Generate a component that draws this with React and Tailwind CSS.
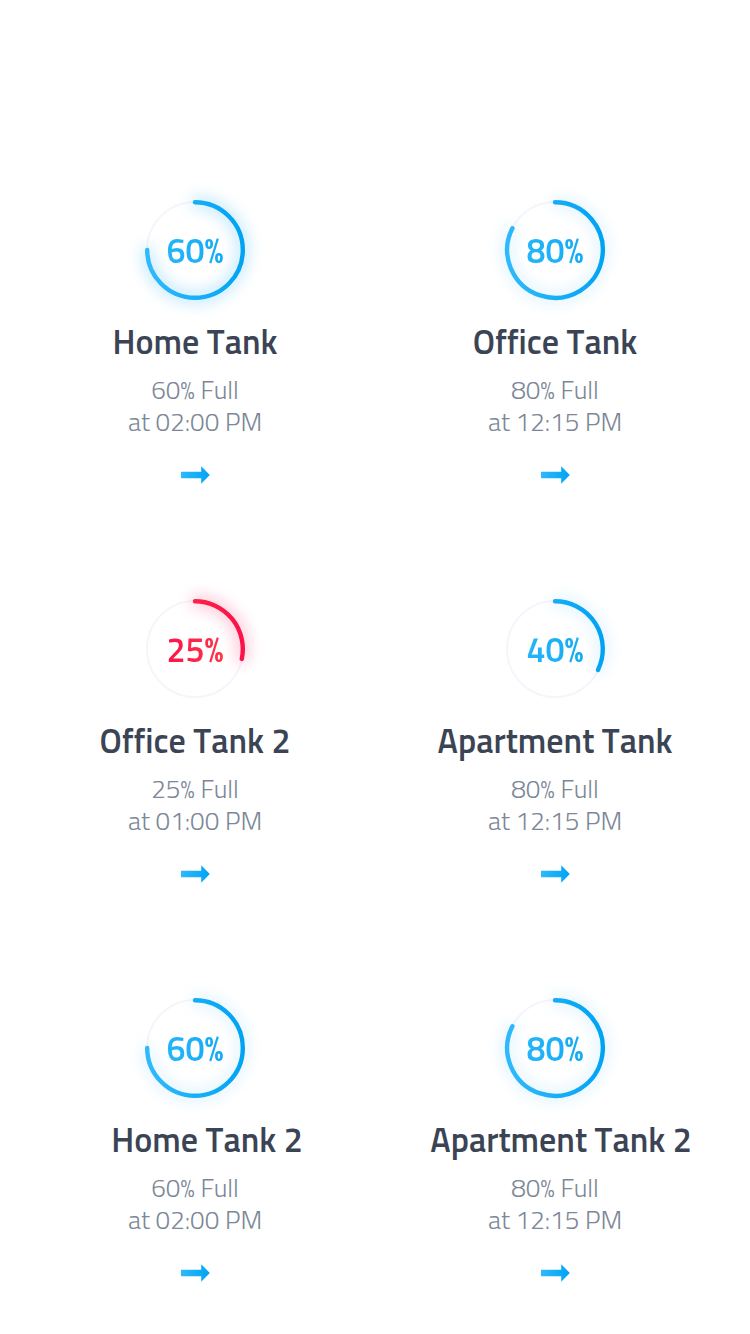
const tanks = [
  { id: "home", name: "Home Tank", level: "60%", status: "60% Full", time: "at 02:00 PM", sweep: 270, tone: "blue", glow: 0.4 },
  { id: "office", name: "Office Tank", level: "80%", status: "80% Full", time: "at 12:15 PM", sweep: 297, tone: "blue", glow: 0.2 },
  { id: "office-2", name: "Office Tank 2", level: "25%", status: "25% Full", time: "at 01:00 PM", sweep: 102, tone: "red", glow: 0.4 },
  { id: "apartment", name: "Apartment Tank", level: "40%", status: "80% Full", time: "at 12:15 PM", sweep: 116, tone: "blue", glow: 0.2 },
  { id: "home-2", name: "Home Tank 2", level: "60%", status: "60% Full", time: "at 02:00 PM", sweep: 270, tone: "blue", glow: 0.2, titleClass: "pl-6" },
  { id: "apartment-2", name: "Apartment Tank 2", level: "80%", status: "80% Full", time: "at 12:15 PM", sweep: 297, tone: "blue", glow: 0.2, titleClass: "pl-3" },
];

const tones = {
  blue: { from: "#2fb9fb", to: "#00a3f3", text: "from-[#25b5f8] to-[#10abf5]" },
  red: { from: "#ff3347", to: "#fc1148", text: "from-[#fc1148] to-[#ff3347]" },
};

function arcPath(sweep, r = 47.8) {
  const a = (sweep * Math.PI) / 180;
  const x = 80 + r * Math.sin(a);
  const y = 80 - r * Math.cos(a);
  return `M80 ${80 - r}A${r} ${r} 0 ${sweep > 180 ? 1 : 0} 1 ${x.toFixed(2)} ${y.toFixed(2)}`;
}

function Ring({ tank }) {
  const tone = tones[tank.tone];
  const d = arcPath(tank.sweep);
  return (
    <div className="relative grid size-[100px] place-items-center">
      <svg className="absolute -inset-[30px] size-[160px]" viewBox="0 0 160 160" fill="none" aria-hidden="true">
        <defs>
          <linearGradient id={`ring-${tank.id}`} gradientUnits="userSpaceOnUse" x1="32" y1="84" x2="128" y2="76">
            <stop stopColor={tone.from} />
            <stop offset="1" stopColor={tone.to} />
          </linearGradient>
          <filter id={`glow-${tank.id}`} filterUnits="userSpaceOnUse" x="0" y="0" width="160" height="160">
            <feGaussianBlur stdDeviation="8" />
          </filter>
        </defs>
        <circle cx="80" cy="80" r="48" stroke="#f5f5fc" strokeWidth="2" />
        <path d={d} stroke={tone.to} strokeWidth="7" strokeLinecap="round" opacity={tank.glow} filter={`url(#glow-${tank.id})`} />
        <path d={d} stroke={`url(#ring-${tank.id})`} strokeWidth="4.4" strokeLinecap="round" />
      </svg>
      <span className={`relative bg-linear-to-r bg-clip-text text-[34px] leading-10 font-semibold text-transparent ${tone.text}`}>
        {tank.level}
      </span>
    </div>
  );
}

function Arrow({ id }) {
  return (
    <svg className="h-[18px] w-[30px]" viewBox="0 0 30 18" aria-hidden="true">
      <defs>
        <linearGradient id={`arrow-${id}`} x1="0" y1="0.5" x2="1" y2="0.5">
          <stop stopColor="#2fb9fb" />
          <stop offset="1" stopColor="#00a3f3" />
        </linearGradient>
      </defs>
      <path d="M1 5.8H21.2V0.2L29.8 9L21.2 17.8V12.2H1Z" fill={`url(#arrow-${id})`} />
    </svg>
  );
}

function TankCard({ tank }) {
  return (
    <article className="flex flex-col items-center text-center">
      <Ring tank={tank} />
      <h2 className={`mt-[21px] text-[34px] leading-10 font-semibold whitespace-nowrap text-[#3b4454] [font-kerning:none] ${tank.titleClass || ""}`}>
        {tank.name}
      </h2>
      <p className="mt-[13px] text-[26px] leading-8 font-light text-[#7c8797]">
        {tank.status}
        <br />
        {tank.time}
      </p>
      <a href={`#${tank.id}`} aria-label={`Open ${tank.name}`} className="mt-7 block">
        <Arrow id={tank.id} />
      </a>
    </article>
  );
}

export default function App() {
  return (
    <main className="min-h-screen bg-white px-[15px] pt-[200px] pb-12 font-['Titillium_Web',Roboto,sans-serif]">
      <div className="grid grid-cols-2 gap-y-[115px]">
        {tanks.map((tank) => (
          <TankCard key={tank.id} tank={tank} />
        ))}
      </div>
    </main>
  );
}
